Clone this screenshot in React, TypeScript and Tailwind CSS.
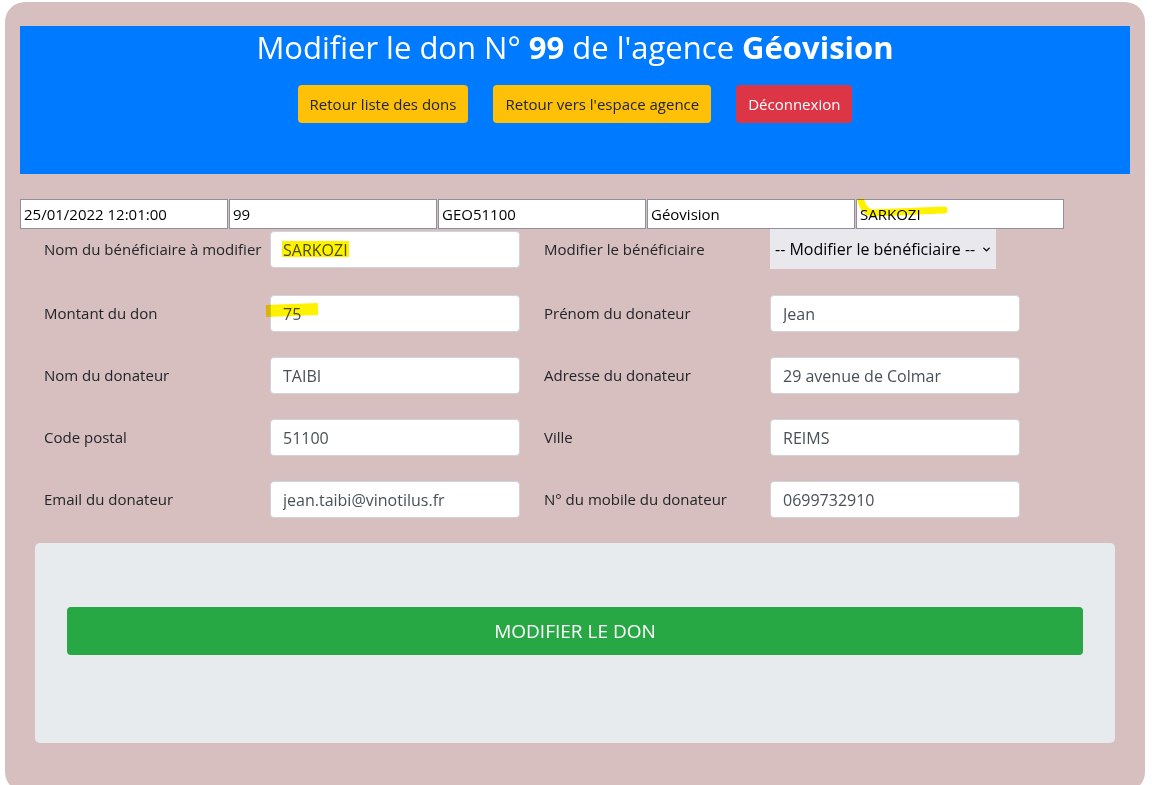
import { ChevronDown } from 'lucide-react';

const rawValues = ['25/01/2022 12:01:00', '99', 'GEO51100', 'Géovision', 'SARKOZI'];

const rows: [string, string, string, string][] = [
  ['Montant du don', '75', 'Prénom du donateur', 'Jean'],
  ['Nom du donateur', 'TAIBI', 'Adresse du donateur', '29 avenue de Colmar'],
  ['Code postal', '51100', 'Ville', 'REIMS'],
  ['Email du donateur', 'jean.taibi@vinotilus.fr', 'N° du mobile du donateur', '0699732910'],
];

function Field({ value, mark }: { value: string; mark?: 'name' | 'amount' }) {
  return (
    <div className="relative">
      <input
        readOnly
        value={value}
        className="h-[37px] w-[250px] rounded-[4px] border border-[#ced4da] bg-white px-[12px] text-[16px] text-[#495057] outline-none"
      />
      {mark === 'name' && (
        <span className="pointer-events-none absolute left-[12px] top-[10px] h-[16px] w-[67px] bg-[#fff200] mix-blend-multiply" />
      )}
      {mark === 'amount' && (
        <span className="pointer-events-none absolute left-[-4px] top-[9px] h-[12px] w-[52px] -rotate-2 bg-[#fff200] mix-blend-multiply" />
      )}
    </div>
  );
}

export default function App() {
  return (
    <div className="min-h-screen bg-white pt-[2px] font-['Segoe_UI','Open_Sans',sans-serif] text-[#212529]">
      <div className="ml-[5px] mr-[12px] h-[790px] rounded-[20px] bg-[#d7bfbf] px-[15px] pt-[24px]">
        <div className="h-[148px] bg-[#007bff] pt-[3px] text-center text-white">
          <h1 className="text-[31px] leading-[1.2]">
            Modifier le don N° <b>99</b> de l'agence <b>Géovision</b>
          </h1>
          <div className="mt-[19px] flex justify-center gap-[25px]">
            <button className="h-[38px] rounded-[4px] bg-[#ffc107] px-[12px] text-[15px] text-[#212529]">
              Retour liste des dons
            </button>
            <button className="h-[38px] rounded-[4px] bg-[#ffc107] px-[12px] text-[15px] text-[#212529]">
              Retour vers l'espace agence
            </button>
            <button className="h-[38px] rounded-[4px] bg-[#dc3545] px-[12px] text-[15px] text-white">
              Déconnexion
            </button>
          </div>
        </div>

        <div className="mt-[25px] flex gap-[1px]">
          {rawValues.map((v, i) => (
            <div key={i} className="relative">
              <input
                readOnly
                value={v}
                className="h-[30px] w-[208px] border border-[#8f8f9d] bg-white px-[3px] text-[15px] text-black outline-none"
              />
              {i === 4 && (
                <svg className="pointer-events-none absolute left-0 top-0 mix-blend-multiply" width="100" height="30">
                  <path d="M5 2 C7 9 10 13 16 14 L88 11" fill="none" stroke="#fff200" strokeWidth="7" strokeLinecap="round" />
                </svg>
              )}
            </div>
          ))}
        </div>

        <div className="pl-[24px] text-[15px]">
          <div className="flex h-[40px] items-center">
            <label className="w-[226px]">Nom du bénéficiaire à modifier</label>
            <div className="pt-[1px]">
              <Field value="SARKOZI" mark="name" />
            </div>
            <label className="ml-[24px] w-[226px]">Modifier le bénéficiaire</label>
            <div className="relative">
              <select className="h-[40px] w-[226px] appearance-none bg-[#e9e9ed] pl-[5px] text-[16px] text-black outline-none">
                <option>-- Modifier le bénéficiaire --</option>
              </select>
              <ChevronDown className="pointer-events-none absolute right-[4px] top-[15px] h-[11px] w-[11px] text-black" strokeWidth={3} />
            </div>
          </div>
          {rows.map(([l1, v1, l2, v2], i) => (
            <div key={i} className={`${i === 0 ? 'mt-[26px]' : 'mt-[25px]'} flex h-[37px] items-center`}>
              <label className="w-[226px]">{l1}</label>
              <Field value={v1} mark={i === 0 ? 'amount' : undefined} />
              <label className="ml-[24px] w-[226px]">{l2}</label>
              <Field value={v2} />
            </div>
          ))}
        </div>

        <div className="mx-[15px] mt-[25px] rounded-[5px] bg-[#e7ebee] px-[32px] pb-[88px] pt-[64px]">
          <button className="h-[48px] w-full rounded-[4px] bg-[#28a745] text-[19px] text-white">MODIFIER LE DON</button>
        </div>
      </div>
    </div>
  );
}
